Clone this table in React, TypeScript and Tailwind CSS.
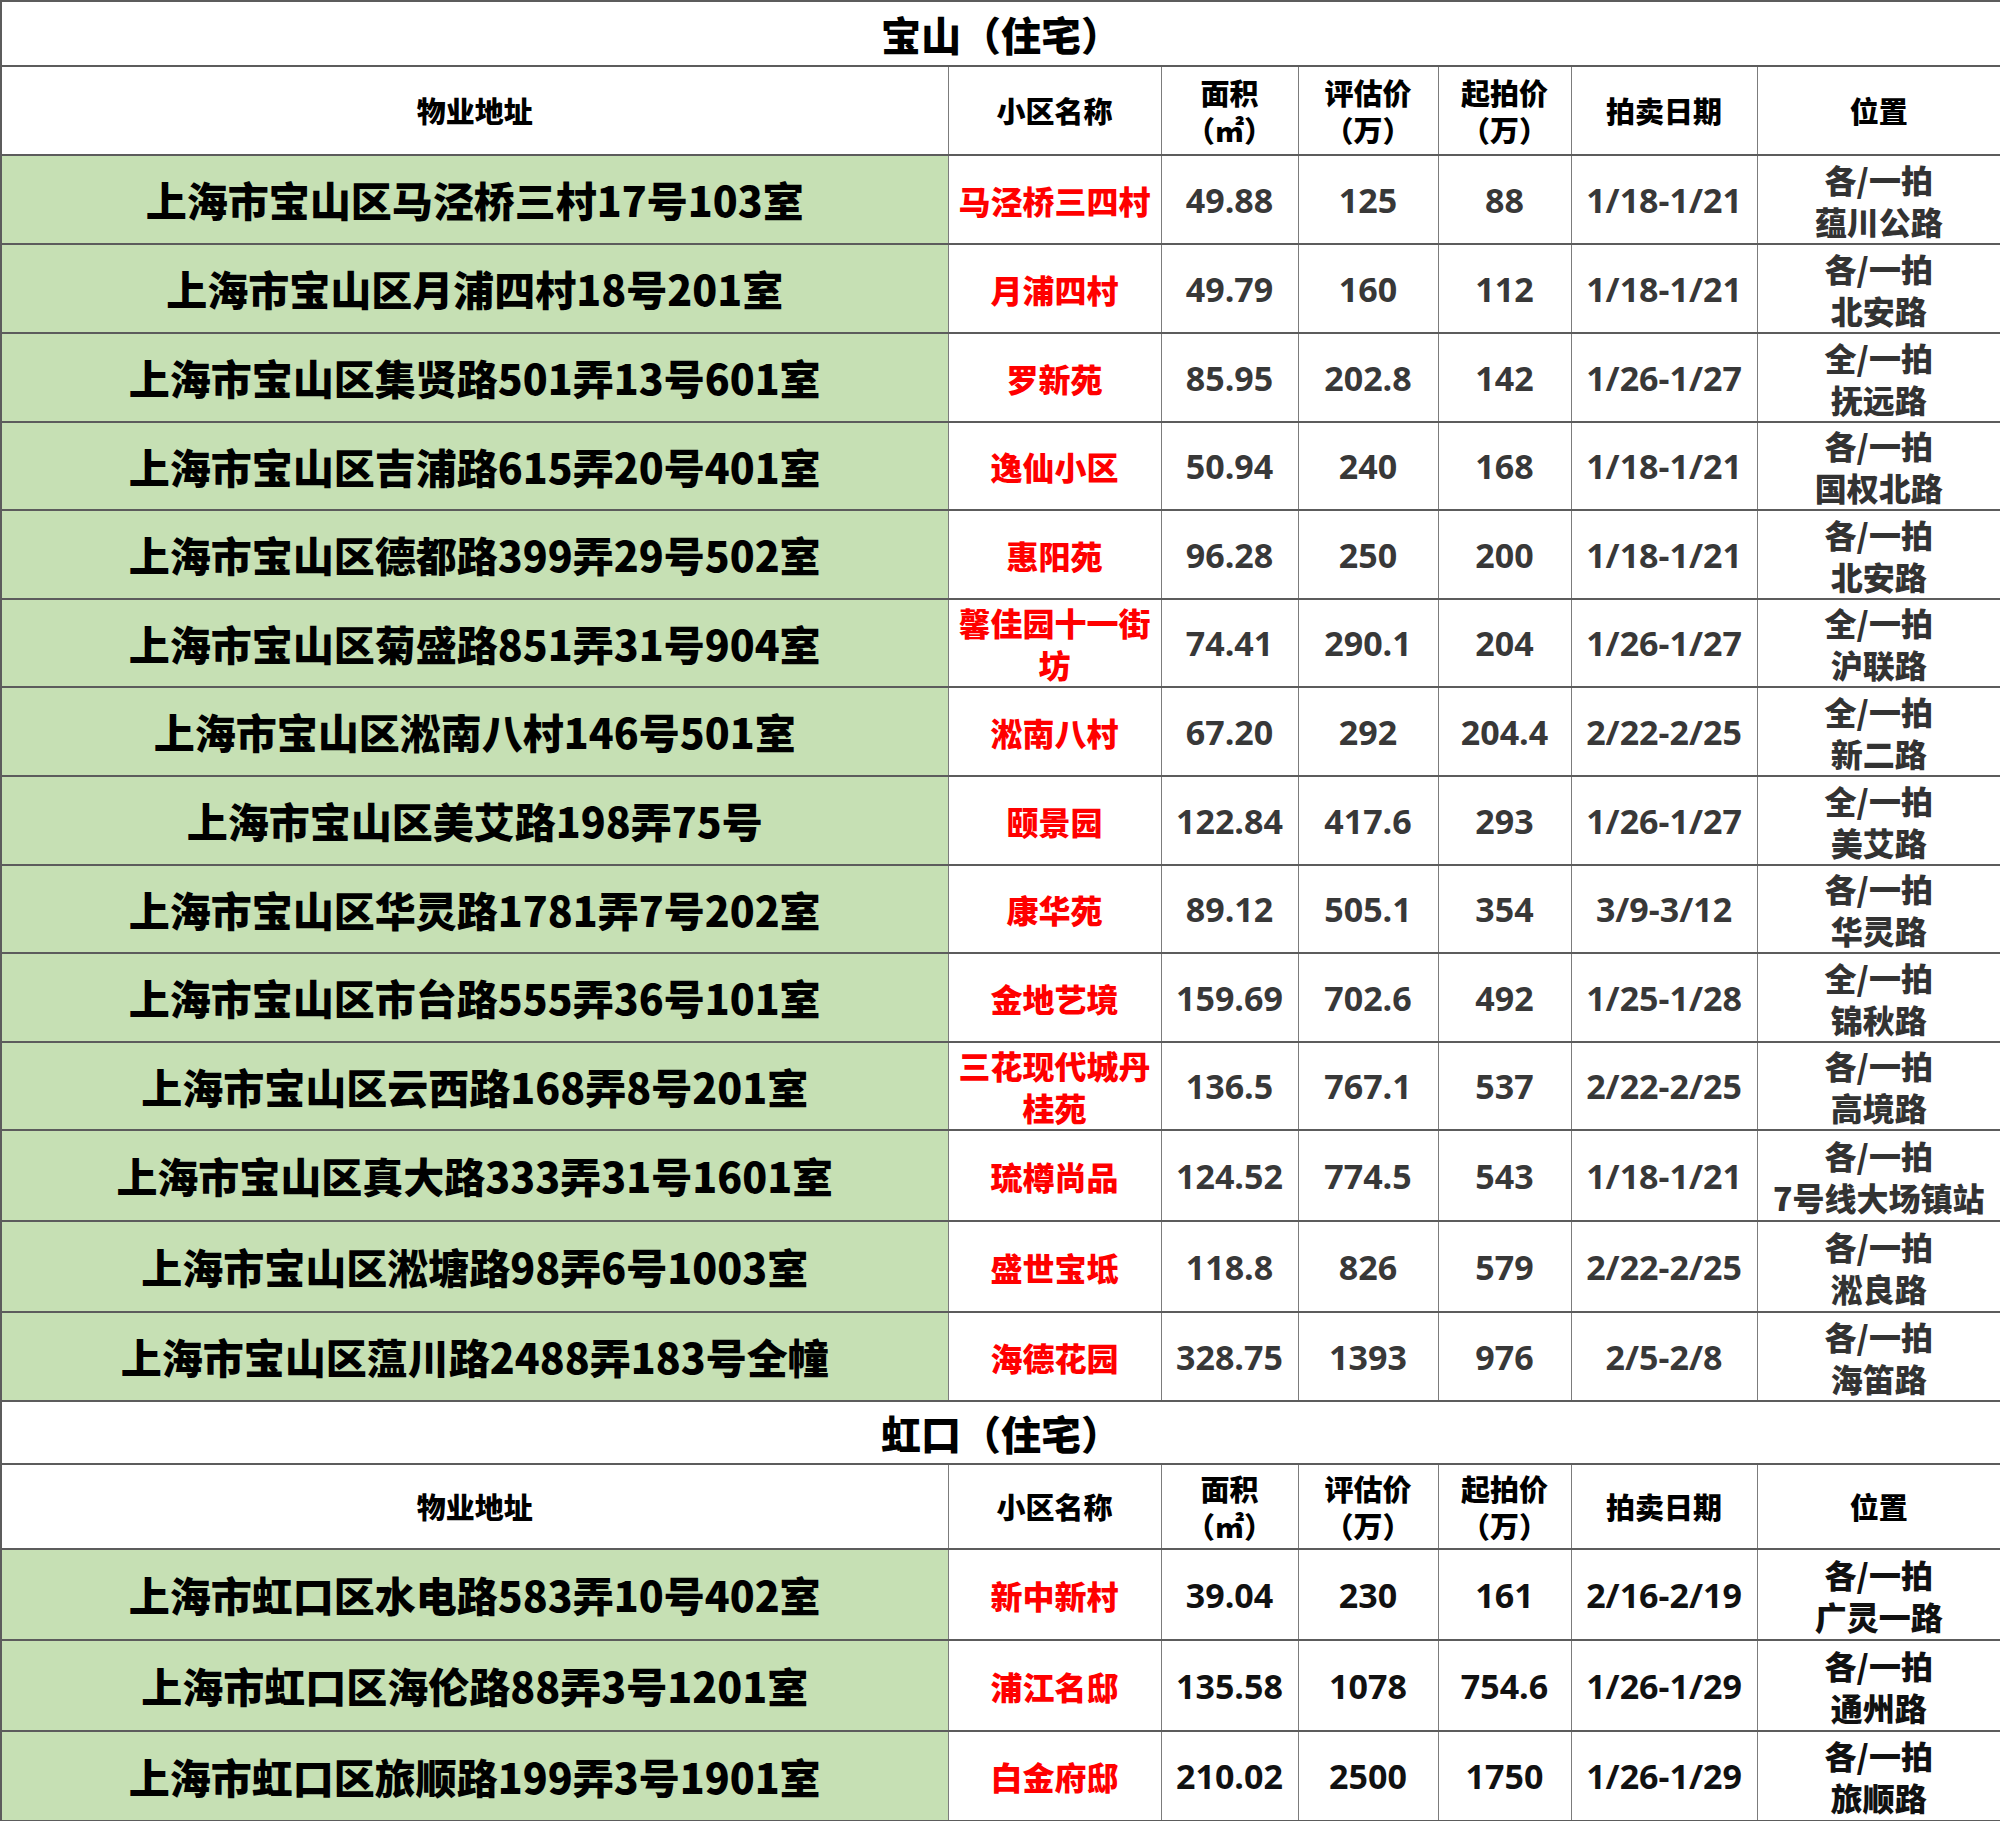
const baoshan = [
  { h: 89, addr: "上海市宝山区马泾桥三村17号103室", name: "马泾桥三四村", area: "49.88", eval: "125", start: "88", date: "1/18-1/21", pos: ["各/一拍", "蕴川公路"] },
  { h: 89, addr: "上海市宝山区月浦四村18号201室", name: "月浦四村", area: "49.79", eval: "160", start: "112", date: "1/18-1/21", pos: ["各/一拍", "北安路"] },
  { h: 89, addr: "上海市宝山区集贤路501弄13号601室", name: "罗新苑", area: "85.95", eval: "202.8", start: "142", date: "1/26-1/27", pos: ["全/一拍", "抚远路"] },
  { h: 88, addr: "上海市宝山区吉浦路615弄20号401室", name: "逸仙小区", area: "50.94", eval: "240", start: "168", date: "1/18-1/21", pos: ["各/一拍", "国权北路"] },
  { h: 89, addr: "上海市宝山区德都路399弄29号502室", name: "惠阳苑", area: "96.28", eval: "250", start: "200", date: "1/18-1/21", pos: ["各/一拍", "北安路"] },
  { h: 88, addr: "上海市宝山区菊盛路851弄31号904室", name: "馨佳园十一街坊", area: "74.41", eval: "290.1", start: "204", date: "1/26-1/27", pos: ["全/一拍", "沪联路"] },
  { h: 89, addr: "上海市宝山区淞南八村146号501室", name: "淞南八村", area: "67.20", eval: "292", start: "204.4", date: "2/22-2/25", pos: ["全/一拍", "新二路"] },
  { h: 89, addr: "上海市宝山区美艾路198弄75号", name: "颐景园", area: "122.84", eval: "417.6", start: "293", date: "1/26-1/27", pos: ["全/一拍", "美艾路"] },
  { h: 88, addr: "上海市宝山区华灵路1781弄7号202室", name: "康华苑", area: "89.12", eval: "505.1", start: "354", date: "3/9-3/12", pos: ["各/一拍", "华灵路"] },
  { h: 89, addr: "上海市宝山区市台路555弄36号101室", name: "金地艺境", area: "159.69", eval: "702.6", start: "492", date: "1/25-1/28", pos: ["全/一拍", "锦秋路"] },
  { h: 88, addr: "上海市宝山区云西路168弄8号201室", name: "三花现代城丹桂苑", area: "136.5", eval: "767.1", start: "537", date: "2/22-2/25", pos: ["各/一拍", "高境路"] },
  { h: 91, addr: "上海市宝山区真大路333弄31号1601室", name: "琉樽尚品", area: "124.52", eval: "774.5", start: "543", date: "1/18-1/21", pos: ["各/一拍", "7号线大场镇站"] },
  { h: 91, addr: "上海市宝山区淞塘路98弄6号1003室", name: "盛世宝坻", area: "118.8", eval: "826", start: "579", date: "2/22-2/25", pos: ["各/一拍", "淞良路"] },
  { h: 89, addr: "上海市宝山区蕰川路2488弄183号全幢", name: "海德花园", area: "328.75", eval: "1393", start: "976", date: "2/5-2/8", pos: ["各/一拍", "海笛路"] },
];

const hongkou = [
  { h: 91, addr: "上海市虹口区水电路583弄10号402室", name: "新中新村", area: "39.04", eval: "230", start: "161", date: "2/16-2/19", pos: ["各/一拍", "广灵一路"] },
  { h: 91, addr: "上海市虹口区海伦路88弄3号1201室", name: "浦江名邸", area: "135.58", eval: "1078", start: "754.6", date: "1/26-1/29", pos: ["各/一拍", "通州路"] },
  { h: 90, addr: "上海市虹口区旅顺路199弄3号1901室", name: "白金府邸", area: "210.02", eval: "2500", start: "1750", date: "1/26-1/29", pos: ["各/一拍", "旅顺路"] },
];

type Row = (typeof baoshan)[number];

const cell = "border-x border-x-[#7c7c7c] border-y-2 border-y-[#5c5c5c] p-0 text-center align-middle";
const cjk = "font-['Noto_Sans_CJK_SC',sans-serif]";
const num = "font-['Open_Sans','Noto_Sans_CJK_SC',sans-serif]";

function Section({ title, rows, titleH, headH, dark }: { title: string; rows: Row[]; titleH: number; headH: number; dark?: boolean }) {
  const numColor = dark ? "text-[#111111] font-bold" : "text-[#383838] font-bold";
  const posColor = dark ? "text-[#111111]" : "text-[#333333]";
  return (
    <>
      <tr style={{ height: titleH }}>
        <td colSpan={7} className={`${cell} ${cjk} text-[40px] font-black leading-none text-black`}>
          {title}
        </td>
      </tr>
      <tr style={{ height: headH }} className={`${cjk} text-[29px] font-black leading-[37px] text-black`}>
        <td className={cell}>物业地址</td>
        <td className={cell}>小区名称</td>
        <td className={cell}>面积<br />（㎡）</td>
        <td className={cell}>评估价<br />（万）</td>
        <td className={cell}>起拍价<br />（万）</td>
        <td className={cell}>拍卖日期</td>
        <td className={cell}>位置</td>
      </tr>
      {rows.map((r, i) => (
        <tr key={i} style={{ height: r.h }}>
          <td className={`${cell} ${cjk} bg-[#c6e0b4] text-[41px] font-black leading-none text-black whitespace-nowrap`}>{r.addr}</td>
          <td className={`${cell} ${cjk} px-2 text-[32px] font-black leading-[42px] text-[#ff0000]`}>{r.name}</td>
          <td className={`${cell} ${num} text-[34px] leading-none ${numColor}`}>{r.area}</td>
          <td className={`${cell} ${num} text-[34px] leading-none ${numColor}`}>{r.eval}</td>
          <td className={`${cell} ${num} text-[34px] leading-none ${numColor}`}>{r.start}</td>
          <td className={`${cell} ${num} text-[34px] leading-none whitespace-nowrap ${numColor}`}>{r.date}</td>
          <td className={`${cell} ${cjk} text-[32px] font-black leading-[42px] whitespace-nowrap ${posColor}`}>
            <div>{r.pos[0]}</div>
            <div>{r.pos[1]}</div>
          </td>
        </tr>
      ))}
    </>
  );
}

export default function App() {
  return (
    <div className="w-[2000px] bg-white">
      <table className="w-[2000px] table-fixed border-2 border-[#5c5c5c]">
        <colgroup>
          <col className="w-[947px]" />
          <col className="w-[213px]" />
          <col className="w-[137px]" />
          <col className="w-[140px]" />
          <col className="w-[133px]" />
          <col className="w-[186px]" />
          <col className="w-[244px]" />
        </colgroup>
        <tbody>
          <Section title="宝山（住宅）" rows={baoshan} titleH={65} headH={89} />
          <Section title="虹口（住宅）" rows={hongkou} titleH={63} headH={85} dark />
        </tbody>
      </table>
    </div>
  );
}
